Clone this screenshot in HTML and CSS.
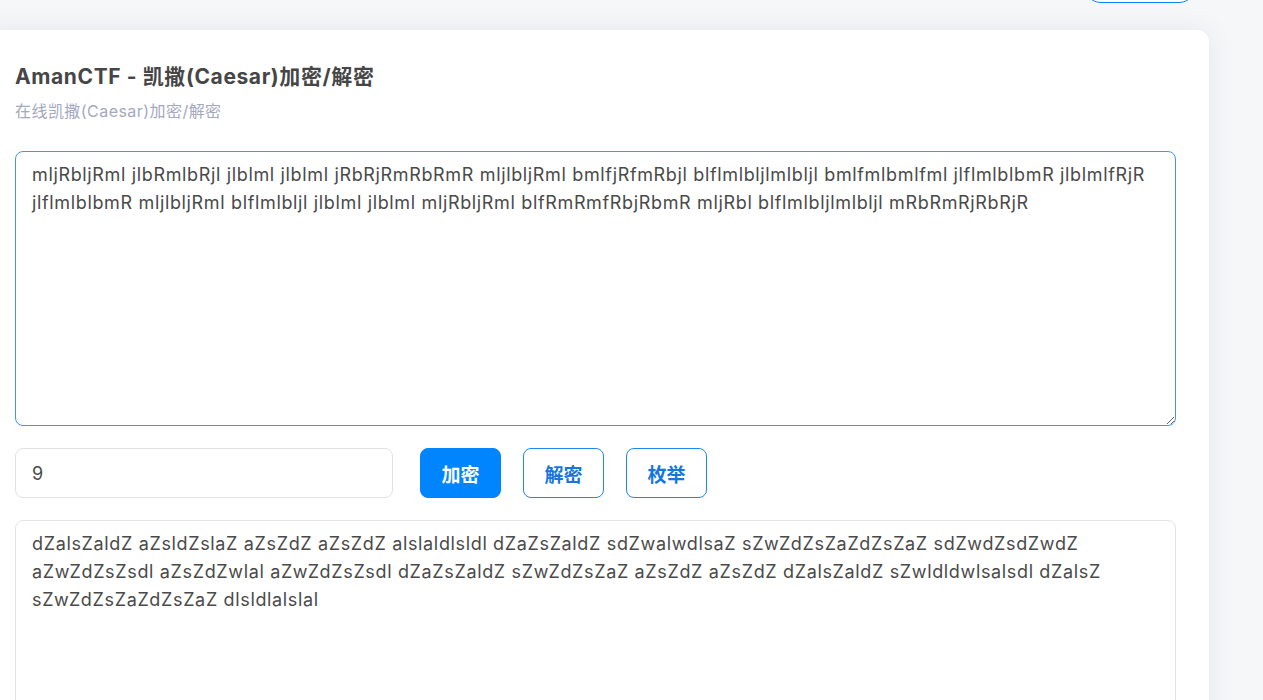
FILE: index.html
```html
<!doctype html>
<html>
<head>
  <meta charset="utf-8">
  <link rel="stylesheet" href="styles.css">
</head>
<body>
  <div class="topbar">
    <button class="pill"></button>
  </div>

  <div class="card">
    <h2 class="title">AmanCTF - 凯撒(Caesar)加密/解密</h2>
    <p class="subtitle">在线凯撒(Caesar)加密/解密</p>

    <textarea class="box box-in">mljRbljRml jlbRmlbRjl jlblml jlblml jRbRjRmRbRmR mljlbljRml bmlfjRfmRbjl blflmlbljlmlbljl bmlfmlbmlfml jlflmlblbmR jlblmlfRjR jlflmlblbmR mljlbljRml blflmlbljl jlblml jlblml mljRbljRml blfRmRmfRbjRbmR mljRbl blflmlbljlmlbljl mRbRmRjRbRjR</textarea>

    <div class="controls">
      <input class="shift" type="text" value="9">
      <button class="btn primary">加密</button>
      <button class="btn">解密</button>
      <button class="btn">枚举</button>
    </div>

    <textarea class="box box-out">dZalsZaldZ aZsldZslaZ aZsZdZ aZsZdZ alslaldlsldl dZaZsZaldZ sdZwalwdlsaZ sZwZdZsZaZdZsZaZ sdZwdZsdZwdZ aZwZdZsZsdl aZsZdZwlal aZwZdZsZsdl dZaZsZaldZ sZwZdZsZaZ aZsZdZ aZsZdZ dZalsZaldZ sZwldldwlsalsdl dZalsZ sZwZdZsZaZdZsZaZ dlsldlalslal</textarea>
  </div>
</body>
</html>
```

FILE: styles.css
```css
body{
  margin:0;
  background-color: #f6f7f9;
  font-family: Inter, "Noto Sans CJK SC", sans-serif;
  color: #4a4a4a;
  overflow: hidden;
}
.topbar{
  height: 30px;
  display: flex;
  justify-content: flex-end;
}
.pill{
  width: 112px;
  height: 34px;
  margin-top: -31px;
  margin-right: 67px;
  border: 1.5px solid #0a84ff;
  border-radius: 17px;
  background: #fff;
}
.card{
  margin: 0 54px 0 -20px;
  padding: 34px 33px 40px 35px;
  background: #fff;
  border-radius: 12px;
  box-shadow: 0 0 30px rgba(20, 30, 60, 0.07);
  height: 700px;
}
.title{
  margin: 0;
  font-size: 21px;
  font-weight: 700;
  line-height: 26px;
  letter-spacing: 0.6px;
  color: #464646;
}
.subtitle{
  margin: 10px 0 0 0;
  font-size: 16px;
  line-height: 22px;
  letter-spacing: 0.45px;
  color: #a5a8c0;
}
.box{
  display: block;
  box-sizing: border-box;
  width: 100%;
  margin: 0;
  padding: 9px 16px;
  font-family: Inter, "Noto Sans CJK SC", sans-serif;
  font-size: 18px;
  line-height: 28px;
  letter-spacing: 0.65px;
  color: #4a4a4a;
  border-radius: 8px;
  outline: none;
}
.box-in{
  margin-top: 29px;
  height: 275px;
  border: 1px solid #4096f0;
}
.box-out{
  height: 260px;
  border: 1px solid #e4e4e4;
}
.controls{
  display: flex;
  align-items: center;
  gap: 22px;
  margin: 22px 0 22px 0;
}
.shift{
  box-sizing: border-box;
  width: 378px;
  height: 50px;
  padding: 0 16px;
  margin-right: 5px;
  border: 1px solid #e2e2e2;
  border-radius: 8px;
  font-family: Inter, sans-serif;
  font-size: 18px;
  color: #4a4a4a;
  outline: none;
}
.btn{
  box-sizing: border-box;
  width: 81px;
  height: 50px;
  border: 1px solid #1f87f0;
  border-radius: 8px;
  background: #fff;
  color: #1576e0;
  font-family: "Noto Sans CJK SC", sans-serif;
  font-size: 19px;
  font-weight: 700;
  cursor: pointer;
}
.primary{
  background: #0085ff;
  border-color: #0085ff;
  color: #fff;
}
```
